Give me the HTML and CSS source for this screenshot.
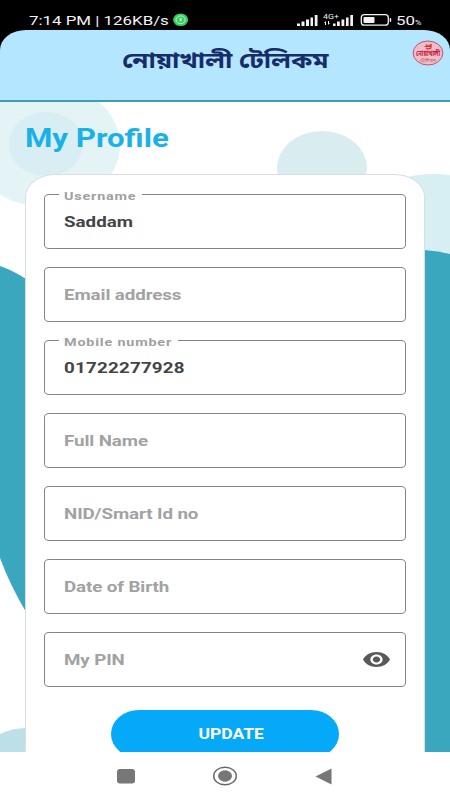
FILE: index.html
```
<!DOCTYPE html>
<html lang="bn">
<head>
    <meta charset="UTF-8">
    <meta name="viewport" content="width=device-width, initial-scale=1.0">
    <title>My Profile</title>
    <link rel="stylesheet" href="styles.css">
</head>

<body>

<!-- Status bar -->
<div class="status-bar">
    <span class="status-time wide">7:14 PM | 126KB/s</span>
    <svg class="status-app" viewBox="0 0 16 14">
        <ellipse cx="7.600" cy="6.800" rx="7.500" ry="6.300" fill="#35cf62"/>
        <ellipse cx="7.600" cy="6.800" rx="4.600" ry="3.900" fill="none" stroke="#b9f3c8" stroke-width="1"/>
        <path d="M6.600 5.100h1.500q1 .1.600 1.500q.8 1.600-.6 1.700H6.600z" fill="#b9f3c8"/>
    </svg>
    <svg class="status-icons" viewBox="0 0 98 16" fill="#f2f2f2">
        <path d="M1 12.500h3v2.500H1zM5.500 10.500h3V15h-3zM10 8.500h3V15h-3zM14.500 6.500h2.500V15h-2.500zM18.800 4h2.700v11h-2.700z"/>
        <text x="27" y="7.700" class="net-label" textLength="16" lengthAdjust="spacingAndGlyphs">4G+</text>
        <path d="M28 12l2-2v4h-1v-2zM32 10v4l2-2h-1v-2zM37 12.500h2.600v2.500H37zM41 10.500h2.800V15H41zM45.500 8.500h2.800V15h-2.800zM50 6.500h2.600V15H50zM54.300 4h2.700v11h-2.700z"/>
        <rect x="65.300" y="3.600" width="27" height="10.600" rx="3" fill="none" stroke="#f2f2f2" stroke-width="1.300"/>
        <rect x="67.500" y="5.900" width="11" height="6" rx="1"/>
        <rect x="93.700" y="7" width="1.500" height="4" rx=".7"/>
    </svg>
    <span class="status-battery wide">50<small>%</small></span>
</div>

<!-- App header -->
<header class="app-header">
    <h1 class="wide">নোয়াখালী টেলিকম</h1>
    <svg class="logo" viewBox="0 0 32 26">
        <ellipse cx="16" cy="13" rx="14.900" ry="12" fill="#eebccb" stroke="#c4526a" stroke-width="1"/>
        <path d="M12.500 6.500h7M14 4.500l2 2l3-2v3.500l-3 1l-2-1" fill="none" stroke="#d8312f" stroke-width="1.200"/>
        <text x="4" y="15.800" class="logo-name" textLength="24" lengthAdjust="spacingAndGlyphs">নোয়াখালী</text>
        <text x="8" y="21.500" class="logo-sub" textLength="16" lengthAdjust="spacingAndGlyphs">টেলিকম</text>
    </svg>
</header>

<main>
    <!-- Background shapes -->
    <svg class="backdrop" viewBox="0 102 450 650">
        <ellipse cx="45" cy="145" rx="75" ry="62" fill="#e3f3f6"/>
        <ellipse cx="46" cy="144" rx="37" ry="32" fill="#d8eef2"/>
        <ellipse cx="322" cy="168" rx="45" ry="37" fill="#d9edf1"/>
        <ellipse cx="433" cy="232" rx="80" ry="58" fill="#d7eef2"/>
        <path d="M0 266Q14 271 26 279V612Q10 585 0 558z" fill="#3aa7be"/>
        <path d="M424 250Q438 251 450 254V752H424z" fill="#3aa7be"/>
        <path d="M0 734Q12 728 26 728V752H0z" fill="#bde0e8"/>
    </svg>

    <h2><span class="wide">My Profile</span></h2>

    <form class="card">
        <div class="field filled">
            <label><span class="wide">Username</span></label>
            <span class="value wide">Saddam</span>
        </div>
        <div class="field"><span class="hint wide">Email address</span></div>
        <div class="field filled">
            <label class="long"><span class="wide">Mobile number</span></label>
            <span class="value number wide">01722277928</span>
        </div>
        <div class="field"><span class="hint wide">Full Name</span></div>
        <div class="field"><span class="hint wide">NID/Smart Id no</span></div>
        <div class="field"><span class="hint wide">Date of Birth</span></div>
        <div class="field">
            <span class="hint wide">My PIN</span>
            <svg class="eye" viewBox="1 4.5 22 15" preserveAspectRatio="none">
                <path fill="#595959" d="M12 4.500C7 4.500 2.730 7.610 1 12c1.730 4.390 6 7.500 11 7.500s9.270-3.110 11-7.500c-1.730-4.390-6-7.500-11-7.500zM12 17c-2.760 0-5-2.240-5-5s2.240-5 5-5 5 2.240 5 5-2.240 5-5 5zm0-8c-1.660 0-3 1.340-3 3s1.340 3 3 3 3-1.340 3-3-1.340-3-3-3z"/>
            </svg>
        </div>
        <button type="button"><span class="wide">UPDATE</span></button>
    </form>
</main>

<!-- System navigation -->
<nav>
    <svg width="18" height="15" viewBox="0 0 18 15"><rect width="18" height="14.500" rx="3" fill="#777"/></svg>
    <svg width="26" height="20" viewBox="0 0 26 20">
        <ellipse cx="13" cy="10" rx="11.300" ry="8.800" fill="none" stroke="#666" stroke-width="1.400"/>
        <ellipse cx="13" cy="10" rx="7" ry="5.700" fill="#777"/>
    </svg>
    <svg width="17" height="17" viewBox="0 0 17 17"><path d="M.500 8.500L16.500.500v16z" fill="#777"/></svg>
</nav>

</body>
</html>
```
FILE: styles.css
```
* {
    box-sizing: border-box;
}
body {
    margin: 0;
    height: 800px;
    display: flex;
    flex-direction: column;
    font-family: Roboto, "Noto Sans Bengali", "Noto Sans", sans-serif;
    background: #fff;
    overflow: hidden;
}

/* Stretched lettering */
.wide {
    display: inline-block;
    white-space: nowrap;
    transform: scaleX(1.25);
    transform-origin: left center;
}

.status-bar {
    height: 50px;
    margin-bottom: -20px;
    padding: 11px 0 0 29px;
    display: flex;
    align-items: flex-start;
    background: #000;
    color: #f2f2f2;
    font-size: 13.5px;
    line-height: 18px;
}
.status-time {
    width: 144px;
}
.status-app {
    width: 16px;
    height: 14px;
    margin-top: 2px;
}
.status-icons {
    width: 98px;
    height: 16px;
    margin-left: 107px;
}
.net-label {
    font-size: 7.5px;
}
.status-battery {
    margin-left: 2px;
}
.status-battery small {
    font-size: 7px;
}

.app-header {
    position: relative;
    height: 72px;
    flex-shrink: 0;
    background: #b4e7ff;
    border-bottom: 2px solid #3b9fb7;
    border-radius: 26px 26px 0 0 / 20px 20px 0 0;
    text-align: center;
}
.app-header h1 {
    margin: 15px 0 0;
    font-size: 22px;
    line-height: 32px;
    color: #172d69;
    transform: scaleX(1.185);
    transform-origin: center;
}
.logo {
    position: absolute;
    top: 10px;
    right: 6px;
    width: 32px;
    height: 26px;
    overflow: visible;
}
.logo-name {
    font-size: 7px;
    font-weight: bold;
    fill: #c81e3c;
}
.logo-sub {
    font-size: 4.5px;
    fill: #b4623c;
}

main {
    position: relative;
    flex: 1;
    min-height: 0;
    padding: 0 25px;
    overflow: hidden;
}
.backdrop {
    position: absolute;
    top: 0;
    left: 0;
    width: 450px;
    height: 650px;
    z-index: -1;
}
h2 {
    margin: 0;
    padding: 20px 0 18px;
    font-size: 25px;
    line-height: 34px;
    color: #1ab1e8;
}

.card {
    height: 620px;
    padding: 19px 18px;
    display: flex;
    flex-direction: column;
    gap: 18px;
    background: #fff;
    border: 1px solid #d8dfe4;
    border-radius: 30px / 23px;
}
.field {
    position: relative;
    height: 55px;
    flex-shrink: 0;
    padding: 0 15px 0 19px;
    display: flex;
    align-items: center;
    justify-content: space-between;
    border: 1px solid #858585;
    border-radius: 5px / 4px;
    font-size: 15px;
    font-weight: bold;
}
.field label {
    position: absolute;
    top: -8px;
    left: 14px;
    width: 83px;
    height: 16px;
    padding-left: 5px;
    background: #fff;
    font-size: 11.5px;
    line-height: 18px;
    letter-spacing: 0.65px;
    color: #a0a0a0;
}
.field label.long {
    width: 119px;
}
.hint {
    color: #a2a2a2;
    letter-spacing: -0.08px;
}
.value {
    color: #444;
}
.number {
    letter-spacing: 0.18px;
}
.eye {
    width: 27px;
    height: 15px;
}

button {
    width: 228px;
    height: 48px;
    flex-shrink: 0;
    margin-top: 5px;
    padding: 0 0 0 13px;
    align-self: center;
    border: none;
    border-radius: 28px / 24px;
    background: #05a9f7;
    font-family: Roboto, sans-serif;
    font-size: 14px;
    font-weight: bold;
    color: #fff;
}
button .wide {
    transform-origin: center;
}

nav {
    height: 48px;
    padding: 0 118px 0 117px;
    display: flex;
    align-items: center;
    justify-content: space-between;
    background: #fff;
}
```
